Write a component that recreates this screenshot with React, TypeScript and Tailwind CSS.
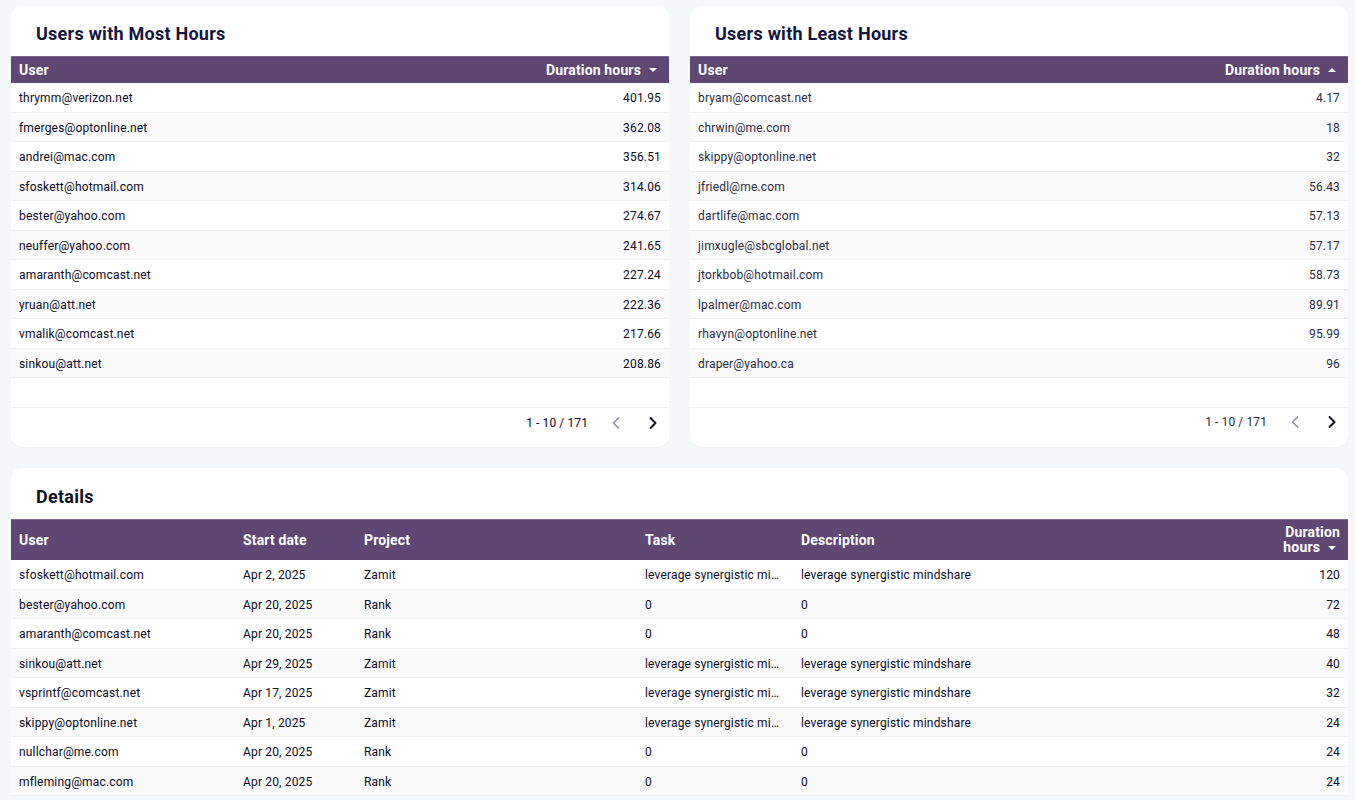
import { ChevronLeft, ChevronRight } from 'lucide-react'

const most = [
  ['thrymm@verizon.net', '401.95'],
  ['fmerges@optonline.net', '362.08'],
  ['andrei@mac.com', '356.51'],
  ['sfoskett@hotmail.com', '314.06'],
  ['bester@yahoo.com', '274.67'],
  ['neuffer@yahoo.com', '241.65'],
  ['amaranth@comcast.net', '227.24'],
  ['yruan@att.net', '222.36'],
  ['vmalik@comcast.net', '217.66'],
  ['sinkou@att.net', '208.86'],
]

const least = [
  ['bryam@comcast.net', '4.17'],
  ['chrwin@me.com', '18'],
  ['skippy@optonline.net', '32'],
  ['jfriedl@me.com', '56.43'],
  ['dartlife@mac.com', '57.13'],
  ['jimxugle@sbcglobal.net', '57.17'],
  ['jtorkbob@hotmail.com', '58.73'],
  ['lpalmer@mac.com', '89.91'],
  ['rhavyn@optonline.net', '95.99'],
  ['draper@yahoo.ca', '96'],
]

const lev = 'leverage synergistic mindshare'
const details = [
  ['sfoskett@hotmail.com', 'Apr 2, 2025', 'Zamit', lev, lev, '120'],
  ['bester@yahoo.com', 'Apr 20, 2025', 'Rank', '0', '0', '72'],
  ['amaranth@comcast.net', 'Apr 20, 2025', 'Rank', '0', '0', '48'],
  ['sinkou@att.net', 'Apr 29, 2025', 'Zamit', lev, lev, '40'],
  ['vsprintf@comcast.net', 'Apr 17, 2025', 'Zamit', lev, lev, '32'],
  ['skippy@optonline.net', 'Apr 1, 2025', 'Zamit', lev, lev, '24'],
  ['nullchar@me.com', 'Apr 20, 2025', 'Rank', '0', '0', '24'],
  ['mfleming@mac.com', 'Apr 20, 2025', 'Rank', '0', '0', '24'],
]

function SortArrow({ up }: { up?: boolean }) {
  return (
    <svg width="8" height="4" viewBox="0 0 8 4" className="ml-[8px] mr-[4px] fill-white">
      <path d={up ? 'M0 4 L4 0 L8 4 Z' : 'M0 0 L4 4 L8 0 Z'} />
    </svg>
  )
}

function SmallTable({ title, rows, up, dim }: { title: string; rows: string[][]; up?: boolean; dim?: boolean }) {
  return (
    <div className="flex-1 h-[441px] bg-white rounded-[12px] shadow-[0_1px_0_0_#eef1f4] overflow-hidden flex flex-col">
      <h2 className="h-[50px] shrink-0 pl-[25px] pt-[16px] text-[18px] leading-[24px] font-bold tracking-[0.25px] text-[#14143c]">{title}</h2>
      <div className="h-[27px] shrink-0 bg-[#604672] border-t border-[#7d6a8c] px-[8px] flex items-center justify-between text-[14px] font-bold text-white tracking-[0.15px]">
        <span>User</span>
        <span className="flex items-center">Duration hours<SortArrow up={up} /></span>
      </div>
      {rows.map((r, i) => (
        <div key={r[0]} className={`h-[29.5px] shrink-0 px-[8px] pt-[2px] flex items-center justify-between border-b border-[#f1f1f1] text-[12px] tracking-[0.17px] ${dim ? 'text-[#2b2b40]' : 'text-[#0a0a23]'} ${i % 2 ? 'bg-[#fafafa]' : 'bg-white'}`}>
          <span>{r[0]}</span>
          <span>{r[1]}</span>
        </div>
      ))}
      <div className="h-[30px] shrink-0 border-b border-[#f1f1f1]" />
      <div className={`flex-1 flex items-center justify-end pr-[6px] text-[12px] tracking-[0.1px] ${dim ? 'pb-[11px] text-[#2b2b40]' : 'pb-[9px] text-[#0a0a23]'}`}>
        <span className="mr-[18px]">1 - 10 / 171</span>
        <ChevronLeft size={20} className="text-[#8f8f9f] mr-[17px]" />
        <ChevronRight size={20} strokeWidth={2.4} className="text-[#0a0a23]" />
      </div>
    </div>
  )
}

const cols = 'grid grid-cols-[224px_121px_281px_156px_1fr_70px]'

export default function App() {
  return (
    <div className="h-screen overflow-hidden bg-[#f5f8f9] pl-[11px] pt-[6px] pr-[7px] font-['Roboto',sans-serif]">
      <div className="flex gap-[21px]">
        <SmallTable title="Users with Most Hours" rows={most} />
        <SmallTable title="Users with Least Hours" rows={least} up dim />
      </div>
      <div className="mt-[21px] bg-white rounded-t-[12px]">
        <h2 className="h-[51px] pl-[25px] pt-[17px] text-[18px] leading-[24px] font-bold tracking-[0.25px] text-[#111122]">Details</h2>
        <div className={`${cols} h-[41px] bg-[#604672] border-t border-[#7d6a8c] items-center text-[14px] font-bold text-white tracking-[0.15px]`}>
          <span className="pl-[8px]">User</span>
          <span className="pl-[8px]">Start date</span>
          <span className="pl-[8px]">Project</span>
          <span className="pl-[8px]">Task</span>
          <span className="pl-[8px]">Description</span>
          <span className="pr-[8px] text-right leading-[15px]">
            Duration<br />
            <span className="inline-flex items-center">hours<SortArrow /></span>
          </span>
        </div>
        {details.map((r, i) => (
          <div key={r[0]} className={`${cols} h-[29.5px] pt-[2px] items-center border-b border-[#f1f1f1] text-[12px] tracking-[0.17px] text-[#0a0a23] ${i % 2 ? 'bg-[#fafafa]' : 'bg-white'}`}>
            <span className="pl-[8px]">{r[0]}</span>
            <span className="pl-[8px]">{r[1]}</span>
            <span className="pl-[8px]">{r[2]}</span>
            <span className="pl-[8px] pr-[12px] truncate">{r[3]}</span>
            <span className="pl-[8px] truncate">{r[4]}</span>
            <span className="pr-[8px] text-right">{r[5]}</span>
          </div>
        ))}
      </div>
    </div>
  )
}
